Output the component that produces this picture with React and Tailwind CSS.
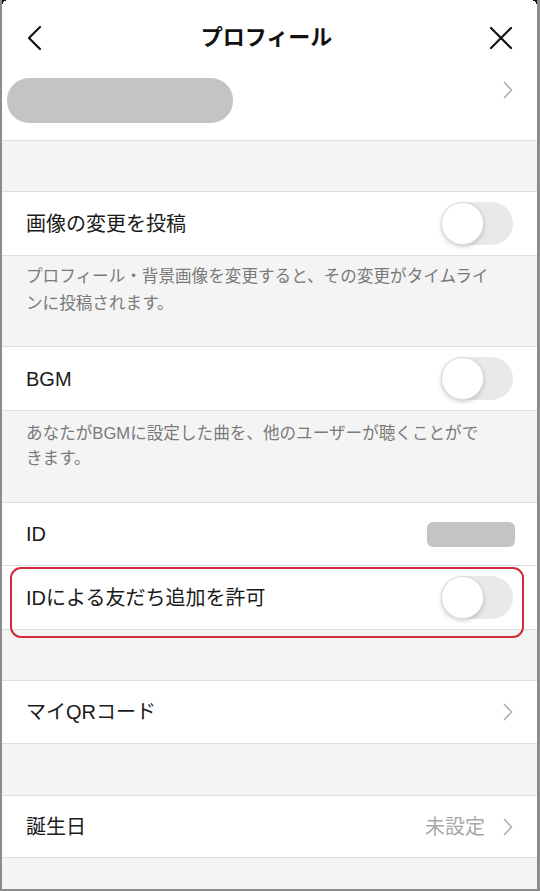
import React from "react";

const font = { fontFamily: '"Liberation Sans", "Noto Sans CJK JP", sans-serif' };

function Chevron() {
  return (
    <svg width="10" height="18" viewBox="0 0 10 18" fill="none">
      <path d="M1.5 1.5 L8.5 9 L1.5 16.5" stroke="#b4b4b4" strokeWidth="1.8" strokeLinecap="round" strokeLinejoin="round" />
    </svg>
  );
}

function Toggle() {
  return (
    <div className="relative h-[43px] w-[72px] rounded-full bg-[#e9e9ea]">
      <div className="absolute left-0 top-0 h-[43px] w-[43px] rounded-full border border-[#dcdcdc] bg-white shadow-[0_2px_4px_rgba(0,0,0,0.18)]" />
    </div>
  );
}

function Row({ label, right, className = "" }) {
  return (
    <div className={`flex items-center justify-between bg-white pl-[24px] pr-[24px] ${className}`}>
      <span className="text-[20px] text-[#1a1a1a]">{label}</span>
      {right}
    </div>
  );
}

const line1a = "プロフィール・背景画像を変更すると、その変更がタイムライ";
const line1b = "ンに投稿されます。";
const line2a = "あなたがBGMに設定した曲を、他のユーザーが聴くことがで";
const line2b = "きます。";

export default function App() {
  return (
    <div
      className="relative h-[891px] w-[540px] overflow-hidden border-b-2 border-l-2 border-r-[3px] border-[#8c8c8c] bg-[#f4f4f4]"
      style={font}
    >
      <div className="pointer-events-none absolute left-0 top-0 h-[6px] w-[6px] bg-[radial-gradient(circle_at_100%_100%,transparent_6px,#111_6px)]" />
      <div className="pointer-events-none absolute right-0 top-0 h-[6px] w-[6px] bg-[radial-gradient(circle_at_0%_100%,transparent_6px,#111_6px)]" />

      {/* Header */}
      <div className="flex h-[75px] items-center justify-between bg-white px-[23px]">
        <svg width="20" height="26" viewBox="0 0 20 26" fill="none">
          <path d="M15 2 L4 13 L15 24" stroke="#111" strokeWidth="2.2" strokeLinecap="round" strokeLinejoin="round" />
        </svg>
        <span className="text-[22px] font-bold text-[#111]">プロフィール</span>
        <svg width="26" height="26" viewBox="0 0 26 26" fill="none">
          <path d="M3 3 L23 23 M23 3 L3 23" stroke="#111" strokeWidth="2.2" strokeLinecap="round" />
        </svg>
      </div>

      {/* Name row */}
      <div className="flex h-[66px] items-center justify-between border-b border-[#dedede] bg-white pl-[5px] pr-[24px]">
        <div className="-mt-[14px] h-[45px] w-[226px] rounded-[22px] bg-[#c4c4c4]" />
        <div className="-mt-[36px]">
          <Chevron />
        </div>
      </div>

      <div className="h-[50px]" />

      {/* Image change */}
      <div className="border-y border-[#dedede]">
        <Row label="画像の変更を投稿" right={<Toggle />} className="h-[63px]" />
      </div>
      <div className="flex h-[90px] flex-col px-[24px] pt-[7px] text-[16.6px] leading-[27px] text-[#7a7a7a]">
        <p className="whitespace-nowrap">{line1a}</p>
        <p className="whitespace-nowrap">{line1b}</p>
      </div>

      {/* BGM */}
      <div className="border-y border-[#dedede]">
        <Row label="BGM" right={<Toggle />} className="h-[63px]" />
      </div>
      <div className="flex h-[91px] flex-col px-[24px] pt-[10px] text-[16.6px] leading-[25px] text-[#7a7a7a]">
        <p className="whitespace-nowrap">{line2a}</p>
        <p className="whitespace-nowrap">{line2b}</p>
      </div>

      {/* ID group */}
      <div className="border-y border-[#dedede]">
        <Row
          label="ID"
          right={<div className="-mr-[2px] h-[25px] w-[88px] rounded-[6px] bg-[#c4c4c4]" />}
          className="h-[63px] border-b border-[#dedede]"
        />
        <div className="relative">
          <Row label="IDによる友だち追加を許可" right={<Toggle />} className="h-[63px]" />
          <div className="pointer-events-none absolute left-[8px] right-[13px] top-[1px] -bottom-[9px] rounded-[11px] border-2 border-[#d22a3a]" />
        </div>
      </div>

      <div className="h-[50px]" />

      {/* QR */}
      <div className="border-y border-[#dedede]">
        <Row label="マイQRコード" right={<Chevron />} className="h-[62px]" />
      </div>

      <div className="h-[51px]" />

      {/* Birthday */}
      <div className="border-y border-[#dedede]">
        <Row
          label="誕生日"
          right={
            <div className="flex items-center gap-[18px]">
              <span className="text-[20px] text-[#a8a8a8]">未設定</span>
              <Chevron />
            </div>
          }
          className="h-[61px]"
        />
      </div>
    </div>
  );
}
